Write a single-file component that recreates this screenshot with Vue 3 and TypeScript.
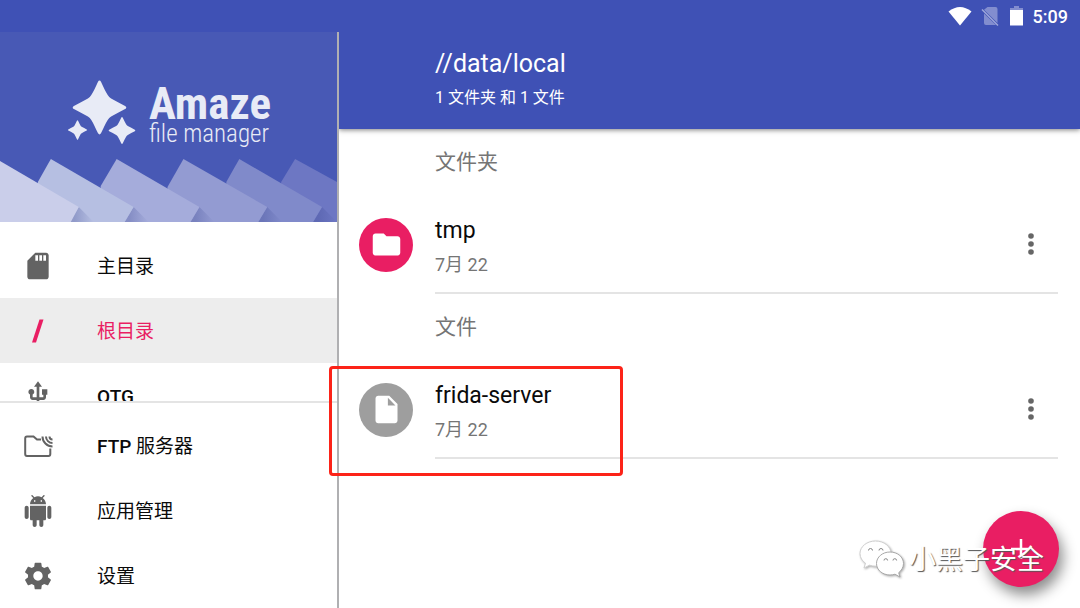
<script setup lang="ts">
interface DrawerItem {
  id: string
  latin?: string
  label?: string
  active?: boolean
  box: string
  path: string
}

interface Entry {
  name: string
  date: string
  kind: 'folder' | 'file'
  marked?: boolean
}

const places: DrawerItem[] = [
  {
    id: 'home',
    label: '主目录',
    box: '0 0 24 24',
    path: 'M18 2h-8L4.02 8 4 20c0 1.1.9 2 2 2h12c1.1 0 2-.9 2-2V4c0-1.1-.9-2-2-2zm-6 6h-2V4h2v4zm3 0h-2V4h2v4zm3 0h-2V4h2v4z',
  },
  { id: 'root', label: '根目录', active: true, box: '0 0 32 32', path: 'M17.5 4.5H21.5L14 27.5H10z' },
  {
    id: 'otg',
    latin: 'OTG',
    box: '0 0 24 24',
    path: 'M15 7v4h1v2h-3V5h2l-3-4-3 4h2v8H8v-2.07c.7-.37 1.2-1.08 1.2-1.93 0-1.21-.99-2.2-2.2-2.2-1.21 0-2.2.99-2.2 2.2 0 .85.5 1.56 1.2 1.93V13c0 1.11.89 2 2 2h3v3.05c-.71.37-1.2 1.1-1.2 1.95 0 1.22.99 2.2 2.2 2.2 1.21 0 2.2-.98 2.2-2.2 0-.85-.49-1.58-1.2-1.95V15h3c1.11 0 2-.89 2-2v-2h1V7h-4z',
  },
]

const tools: DrawerItem[] = [
  { id: 'ftp', latin: 'FTP', label: '服务器', box: '0 0 32 32', path: '' },
  {
    id: 'apps',
    label: '应用管理',
    box: '0 0 24 24',
    path: 'M6 18c0 .55.45 1 1 1h1v3.5c0 .83.67 1.5 1.5 1.5s1.5-.67 1.5-1.5V19h2v3.5c0 .83.67 1.5 1.5 1.5s1.5-.67 1.5-1.5V19h1c.55 0 1-.45 1-1V8H6v10zM3.5 8C2.67 8 2 8.67 2 9.5v7c0 .83.67 1.5 1.5 1.5S5 17.33 5 16.5v-7C5 8.67 4.33 8 3.5 8zm17 0c-.83 0-1.5.67-1.5 1.5v7c0 .83.67 1.5 1.5 1.5s1.5-.67 1.5-1.5v-7c0-.83-.67-1.5-1.5-1.5zm-4.97-5.84l1.3-1.3c.2-.2.2-.51 0-.71-.2-.2-.51-.2-.71 0l-1.48 1.48C13.85 1.23 12.95 1 12 1c-.96 0-1.86.23-2.66.63L7.85.15c-.2-.2-.51-.2-.71 0-.2.2-.2.51 0 .71l1.31 1.31C6.97 3.26 6 5.01 6 7h12c0-1.99-.97-3.75-2.47-4.84zM10 5H9V4h1v1zm5 0h-1V4h1v1z',
  },
  {
    id: 'settings',
    label: '设置',
    box: '0 0 24 24',
    path: 'M19.43 12.98c.04-.32.07-.64.07-.98s-.03-.66-.07-.98l2.11-1.65c.19-.15.24-.42.12-.64l-2-3.46c-.12-.22-.39-.3-.61-.22l-2.49 1c-.52-.4-1.08-.73-1.69-.98l-.38-2.65C14.46 2.18 14.25 2 14 2h-4c-.25 0-.46.18-.49.42l-.38 2.65c-.61.25-1.17.59-1.69.98l-2.49-1c-.23-.09-.49 0-.61.22l-2 3.46c-.13.22-.07.49.12.64l2.11 1.65c-.04.32-.07.65-.07.98s.03.66.07.98l-2.11 1.65c-.19.15-.24.42-.12.64l2 3.46c.12.22.39.3.61.22l2.49-1c.52.4 1.08.73 1.69.98l.38 2.65c.03.24.24.42.49.42h4c.25 0 .46-.18.49-.42l.38-2.65c.61-.25 1.17-.59 1.69-.98l2.49 1c.23.09.49 0 .61-.22l2-3.46c.12-.22.07-.49-.12-.64l-2.11-1.65zM12 15.5c-1.93 0-3.5-1.57-3.5-3.5s1.57-3.5 3.5-3.5 3.5 1.57 3.5 3.5-1.57 3.5-3.5 3.5z',
  },
]

const sections: { title: string; entries: Entry[] }[] = [
  { title: '文件夹', entries: [{ name: 'tmp', date: '7月 22', kind: 'folder' }] },
  { title: '文件', entries: [{ name: 'frida-server', date: '7月 22', kind: 'file', marked: true }] },
]

const glyphs = {
  folder: 'M10 4H4c-1.1 0-1.99.9-1.99 2L2 18c0 1.1.9 2 2 2h16c1.1 0 2-.9 2-2V8c0-1.1-.9-2-2-2h-8l-2-2z',
  file: 'M6 2c-1.1 0-1.99.9-1.99 2L4 20c0 1.1.89 2 1.99 2H18c1.1 0 2-.9 2-2V8l-6-6H6zm7 7V3.5L18.5 9H13z',
}

const star =
  'M-1.6-25.6Q0-28.4 1.6-25.6C4-20.5 6-16 8.2-12.4Q9.5-10.2 11.6-9C16-6.5 21-4 25.6-1.6Q28 0 25.6 1.6C21 4 16 6.5 11.6 9Q9.5 10.2 8.2 12.4C6 16 4 20.5 1.6 25.6Q0 28.4-1.6 25.6C-4 20.5-6 16-8.2 12.4Q-9.5 10.2-11.6 9C-16 6.5-21 4-25.6 1.6Q-28 0-25.6-1.6C-21-4-16-6.5-11.6-9Q-9.5-10.2-8.2-12.4C-6-16-4-20.5-1.6-25.6z'

const cards = [
  { points: '296,127 282,150 282,190 338,190 338,150', fill: '#6d77c3', corner: null },
  { points: '240,127 227,150 227,190 314,190 323,175', fill: '#808aca', corner: 323 },
  { points: '184,127 168,155 168,190 259,190 268,175', fill: '#939bd2', corner: 268 },
  { points: '117,127 101,154 101,190 191,190 200,175', fill: '#a5acdb', corner: 200 },
  { points: '51,127 38,150 38,190 125,190 134,175', fill: '#b6bfe2', corner: 134 },
  { points: '0,129 0,190 71,190 79,175', fill: '#caceea', corner: 79 },
]
</script>

<template>
  <div class="app">
    <header class="status">
      <svg class="status-icons" width="77" height="22" viewBox="0 0 77 22" aria-hidden="true">
        <path d="M0.5 6.5Q12-2.5 23.5 6.5L12 20.5z" fill="#fff" />
        <path d="M39.5 2H47.5Q49.5 2 49.5 4V18L36 4.8zM36 8.5L48 20H38Q36 20 36 18z" fill="#fff" opacity=".35" />
        <path d="M34 4.5L50 20.5" stroke="#fff" stroke-width="1.5" opacity=".5" />
        <path d="M66 1H71V3H75V6H62V3H66z" fill="#fff" opacity=".35" />
        <path d="M62 5H75V20.5H62z" fill="#fff" />
      </svg>
      <time class="clock">5:09</time>
    </header>

    <div class="body">
      <aside class="drawer">
        <div class="banner">
          <svg class="banner-art" viewBox="0 0 338 190" preserveAspectRatio="none" aria-hidden="true">
            <defs>
              <linearGradient id="fold" x1="0" x2="1" y1="0" y2="0">
                <stop offset="0.2" stop-color="#3a4690" stop-opacity=".3" />
                <stop offset="1" stop-color="#3a4690" stop-opacity="0" />
              </linearGradient>
            </defs>
            <g v-for="card in cards" :key="card.points">
              <path
                v-if="card.corner"
                :d="`M${card.corner} 175l15 15h-24z`"
                fill="url(#fold)"
              />
              <polygon :points="card.points" :fill="card.fill" />
            </g>
          </svg>
          <div class="brand">
            <svg class="stars" width="68" height="66" viewBox="0 0 68 66" aria-hidden="true">
              <path :d="star" transform="translate(31.5 28.5)" />
              <path :d="star" transform="translate(9.5 51) scale(.36)" />
              <path :d="star" transform="translate(54 51.5) scale(.5)" />
            </svg>
            <div class="wordmark">
              <strong>Amaze</strong>
              <span>file manager</span>
            </div>
          </div>
        </div>

        <nav class="places">
          <button v-for="item in places" :key="item.id" type="button" class="item" :class="{ active: item.active }">
            <svg width="32" height="32" :viewBox="item.box" aria-hidden="true"><path :d="item.path" /></svg>
            <span><b v-if="item.latin">{{ item.latin }}</b>{{ item.label }}</span>
          </button>
        </nav>

        <nav class="tools">
          <button v-for="item in tools" :key="item.id" type="button" class="item">
            <svg v-if="item.id === 'ftp'" width="32" height="32" viewBox="0 0 32 32" aria-hidden="true">
              <g class="outline">
                <path d="M19 9.5H15L11.5 6.5H5Q3.2 6.5 3.2 8.5V24Q3.2 26 5 26H26.5Q28.3 26 28.3 24V18.5" />
                <path d="M20.5 6.5A10 10 0 0 0 30.500 16.500M24 6.500A6.500 6.500 0 0 0 30.500 13M27.500 6.500A3 3 0 0 0 30.500 9.500" />
              </g>
            </svg>
            <svg v-else width="32" height="32" :viewBox="item.box" aria-hidden="true"><path :d="item.path" /></svg>
            <span><b v-if="item.latin">{{ item.latin }}&nbsp;</b>{{ item.label }}</span>
          </button>
        </nav>
      </aside>

      <main class="content">
        <div class="toolbar">
          <h1>//data/local</h1>
          <p>1 文件夹 和 1 文件</p>
        </div>

        <section v-for="section in sections" :key="section.title">
          <h2>{{ section.title }}</h2>
          <div v-for="entry in section.entries" :key="entry.name" class="entry">
            <span class="avatar" :class="entry.kind">
              <svg width="33" height="33" viewBox="0 0 24 24" aria-hidden="true"><path :d="glyphs[entry.kind]" /></svg>
            </span>
            <div class="details">
              <div class="names">
                <span class="name">{{ entry.name }}</span>
                <span class="date">{{ entry.date }}</span>
              </div>
              <button type="button" class="more" :aria-label="`${entry.name} 菜单`">
                <svg width="6" height="24" viewBox="0 0 6 24" aria-hidden="true">
                  <circle cx="3" cy="4" r="2.8" /><circle cx="3" cy="12" r="2.8" /><circle cx="3" cy="20" r="2.8" />
                </svg>
              </button>
            </div>
            <span v-if="entry.marked" class="marker"></span>
          </div>
        </section>

        <button type="button" class="fab" aria-label="新建">
          <svg width="20" height="20" viewBox="0 0 20 20" aria-hidden="true">
            <path d="M10 0V20M0 10H20" stroke="#fff" stroke-width="2.5" />
          </svg>
        </button>

        <div class="credit">
          <svg width="46" height="40" viewBox="0 0 46 40" aria-hidden="true">
            <path class="back" d="M16.5 1C8 1 1 6.5 1 13.5C1 17.5 3.2 21 6.5 23.2L5 28L10.5 25.2Q13.5 26.2 17 26.2C25.5 26 32 20.5 32 13.5C32 6.5 25 1 16.5 1z" />
            <path class="front" d="M31 12C23.5 12 17.5 17 17.5 23.5C17.5 30 23.5 35 31 35Q33.5 35 36 34.2L41 37L39.7 32.7C42.5 30.5 44.5 27.2 44.5 23.5C44.5 17 38.5 12 31 12z" />
            <path class="eyes" d="M9.5 10.5a2 2 0 0 1 4 0M20 10.5a2 2 0 0 1 4 0M25 20.5a1.8 1.8 0 0 1 3.6 0M34 20.5a1.8 1.8 0 0 1 3.6 0" />
          </svg>
          <span>小黑子安全</span>
        </div>
      </main>
    </div>
  </div>
</template>

<style>
body {
  margin: 0;
}
</style>

<style scoped>
.app {
  display: flex;
  flex-direction: column;
  height: 100vh;
  overflow: hidden;
  background: #fff;
  color: #0a0a0a;
  font-family: Roboto, "Noto Sans CJK SC", sans-serif;
}

button {
  margin: 0;
  padding: 0;
  border: 0;
  background: none;
  color: inherit;
  font: inherit;
  cursor: pointer;
}

svg {
  display: block;
  flex: none;
  fill: currentColor;
}

.outline {
  fill: none;
  stroke: currentColor;
  stroke-width: 2px;
}

.status {
  display: flex;
  flex: none;
  align-items: center;
  justify-content: flex-end;
  gap: 8px;
  height: 32px;
  padding-right: 12px;
  background: #3f51b5;
  color: #fff;
}

.clock {
  padding-top: 2px;
  font-size: 18px;
  font-weight: 500;
  line-height: 24px;
}

.body {
  display: flex;
  flex: 1;
  min-height: 0;
}

.drawer {
  display: flex;
  flex: none;
  flex-direction: column;
  width: 337px;
  border-right: 2px solid #b0b0b2;
}

.banner {
  position: relative;
  flex: none;
  height: 190px;
  background: #4859b5;
}

.banner-art {
  position: absolute;
  inset: 0;
  width: 100%;
  height: 100%;
}

.brand {
  position: relative;
  display: flex;
  gap: 13px;
  padding: 47px 0 0 68px;
  color: #e8ebf6;
}

.wordmark {
  display: flex;
  flex-direction: column;
  padding-top: 5px;
  font-family: "Roboto Condensed", "Liberation Sans Narrow", Roboto, sans-serif;
}

.wordmark strong {
  font-size: 45px;
  font-weight: 700;
  line-height: 40px;
}

.wordmark span {
  font-size: 25px;
  font-weight: 300;
  line-height: 20px;
}

.places {
  flex: 1;
  min-height: 0;
  padding-top: 11px;
  overflow: hidden;
}

.tools {
  flex: none;
  padding-top: 10px;
  border-top: 2px solid #e4e4e4;
}

.item {
  display: flex;
  align-items: center;
  gap: 43px;
  width: 100%;
  height: 65px;
  padding-left: 22px;
  font-size: 19px;
  line-height: 28px;
  text-align: left;
}

.item span {
  padding-top: 2px;
}

.item svg {
  color: #636363;
}

.item b {
  font-weight: 500;
}

.item.active {
  background: #ededed;
}

.item.active,
.item.active svg {
  color: #e91e63;
}

.content {
  position: relative;
  flex: 1;
  min-width: 0;
}

.toolbar {
  box-sizing: border-box;
  height: 97px;
  padding: 16px 22px 0 96px;
  background: #3f51b5;
  box-shadow: 0 1px 5px rgba(0, 0, 0, 0.5);
  clip-path: inset(0 0 -12px 0);
  color: #fff;
}

h1 {
  margin: 0;
  font-size: 25px;
  font-weight: 400;
  line-height: 32px;
}

p {
  margin: 0;
  padding-top: 6px;
  font-size: 16px;
  line-height: 24px;
}

h2 {
  margin: 0;
  padding-left: 96px;
  color: #757575;
  font-size: 21px;
  font-weight: 400;
  line-height: 66px;
}

.entry {
  position: relative;
  display: flex;
  gap: 22px;
  height: 99px;
  padding: 0 22px 0 20px;
}

.avatar {
  display: flex;
  flex: none;
  align-items: center;
  justify-content: center;
  align-self: center;
  width: 54px;
  height: 54px;
  border-radius: 50%;
  color: #fff;
}

.avatar.folder {
  background: #e91e63;
}

.avatar.file {
  background: #9e9e9e;
}

.details {
  display: flex;
  flex: 1;
  align-items: center;
  justify-content: space-between;
  padding-right: 16px;
  border-bottom: 2px solid #e4e4e4;
}

.names {
  display: flex;
  flex-direction: column;
  gap: 6px;
  padding-top: 8px;
}

.name {
  font-size: 23px;
  line-height: 28px;
}

.date {
  color: #757575;
  font-size: 18px;
  line-height: 28px;
}

.more {
  padding: 8px;
  color: #666;
}

.marker {
  position: absolute;
  top: 6px;
  left: -10px;
  box-sizing: border-box;
  width: 294px;
  height: 110px;
  border: 3px solid #fc2318;
  border-radius: 4px;
  pointer-events: none;
}

.fab {
  position: absolute;
  right: 21px;
  bottom: 21px;
  display: flex;
  align-items: center;
  justify-content: center;
  width: 76px;
  height: 76px;
  border-radius: 50%;
  background: #e91e63;
  box-shadow: 4px 8px 14px rgba(0, 0, 0, 0.45);
}

.credit {
  position: absolute;
  right: 36px;
  bottom: 28px;
  display: flex;
  align-items: center;
  gap: 4px;
  color: #fff;
  font-size: 27px;
  line-height: 40px;
  text-shadow: 1px 1px 1px #555;
  pointer-events: none;
}

.credit svg {
  filter: drop-shadow(1px 1px 1px #aaa);
}

.credit .back {
  stroke: #d0d0d0;
  stroke-width: 1px;
}

.credit .front {
  stroke: #a8a8a8;
  stroke-width: 1px;
}

.credit .eyes {
  fill: none;
  stroke: #888;
}
</style>
